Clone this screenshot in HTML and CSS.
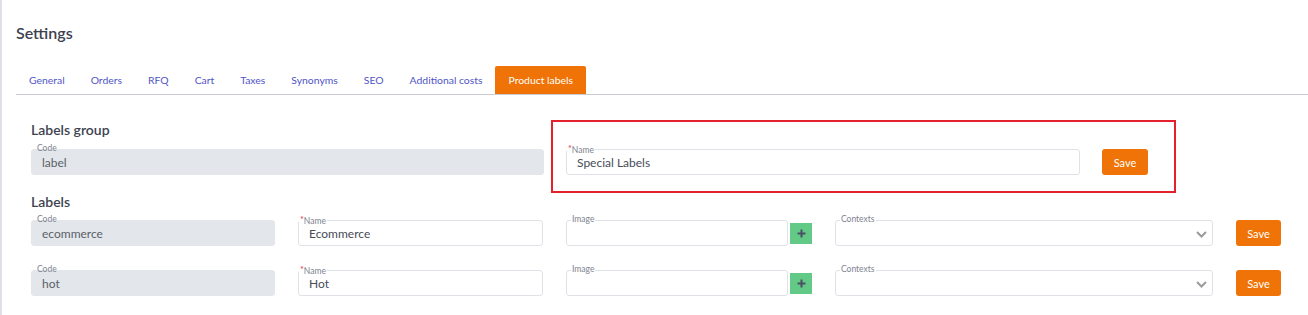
FILE: index.html
```html
<!DOCTYPE html>
<html lang="en">
<head>
  <meta charset="UTF-8">
  <meta name="viewport" content="width=device-width, initial-scale=1.0">
  <title>Settings</title>
  <link rel="stylesheet" href="styles.css">
</head>
<body>
  <div class="page">
    <h1 class="page-title">Settings</h1>
    <nav class="tabs">
      <a class="tab" href="#">General</a>
      <a class="tab" href="#">Orders</a>
      <a class="tab" href="#">RFQ</a>
      <a class="tab" href="#">Cart</a>
      <a class="tab" href="#">Taxes</a>
      <a class="tab" href="#">Synonyms</a>
      <a class="tab" href="#">SEO</a>
      <a class="tab" href="#">Additional costs</a>
      <a class="tab active" href="#">Product labels</a>
    </nav>

    <div class="panel">
      <div class="group-row">
        <div class="group-code">
          <h2 class="section-title">Labels group</h2>
          <div class="field readonly">
            <label class="field-label">Code</label>
            <input type="text" value="label" readonly>
          </div>
        </div>
        <div class="highlight">
          <div class="field group-name">
            <label class="field-label required"><span class="req">*</span>Name</label>
            <input type="text" value="Special Labels">
          </div>
          <button class="btn-save">Save</button>
        </div>
      </div>

      <h2 class="section-title labels-title">Labels</h2>

      <div class="label-row">
        <div class="field readonly">
          <label class="field-label">Code</label>
          <input type="text" value="ecommerce" readonly>
        </div>
        <div class="field">
          <label class="field-label required"><span class="req">*</span>Name</label>
          <input type="text" value="Ecommerce">
        </div>
        <div class="image-group">
          <div class="field">
            <label class="field-label">Image</label>
            <input type="text" value="">
          </div>
          <button class="btn-add" title="Add image">
            <svg width="9" height="9" viewBox="0 0 9 9"><path d="M4.5 0.5v8M0.5 4.5h8" stroke="#4b4f63" stroke-width="2"/></svg>
          </button>
        </div>
        <div class="field select-field">
          <label class="field-label">Contexts</label>
          <select><option></option></select>
          <svg class="chevron" width="11" height="7" viewBox="0 0 11 7"><path d="M1 1l4.5 4.5L10 1" fill="none" stroke="#9b9b9b" stroke-width="2"/></svg>
        </div>
        <button class="btn-save">Save</button>
      </div>

      <div class="label-row">
        <div class="field readonly">
          <label class="field-label">Code</label>
          <input type="text" value="hot" readonly>
        </div>
        <div class="field">
          <label class="field-label required"><span class="req">*</span>Name</label>
          <input type="text" value="Hot">
        </div>
        <div class="image-group">
          <div class="field">
            <label class="field-label">Image</label>
            <input type="text" value="">
          </div>
          <button class="btn-add" title="Add image">
            <svg width="9" height="9" viewBox="0 0 9 9"><path d="M4.5 0.5v8M0.5 4.5h8" stroke="#4b4f63" stroke-width="2"/></svg>
          </button>
        </div>
        <div class="field select-field">
          <label class="field-label">Contexts</label>
          <select><option></option></select>
          <svg class="chevron" width="11" height="7" viewBox="0 0 11 7"><path d="M1 1l4.5 4.5L10 1" fill="none" stroke="#9b9b9b" stroke-width="2"/></svg>
        </div>
        <button class="btn-save">Save</button>
      </div>
    </div>
  </div>
</body>
</html>
```

FILE: styles.css
```css
* { box-sizing: border-box; }
html, body { margin: 0; height: 100%; }
body { font-family: Lato, "Open Sans", sans-serif; color: #3e4350; background: #fff; }
.page { min-height: 100%; border-left: 2px solid #dde0e4; padding: 23px 0 0 14px; }
.page-title { margin: 0; font-size: 16px; line-height: 20px; font-weight: 600; color: #3c4150; }

.tabs { display: flex; margin-top: 23px; border-bottom: 1px solid #c9ccd2; }
.tab { height: 28px; padding: 0 13px; line-height: 28px; font-size: 10.4px; color: #4f55c7; text-decoration: none; border-radius: 2px 2px 0 0; }
.tab.active { background: #ef7306; color: #fff; }

.panel { padding: 25px 0 0 15px; }
.section-title { margin: 0 0 11px; font-size: 14px; line-height: 17px; font-weight: 600; color: #3e4350; }
.labels-title { margin-bottom: 10px; }

.group-row { display: flex; align-items: flex-end; }
.group-code { width: 513px; margin-bottom: 18px; }
.highlight { display: flex; align-items: center; gap: 22px; margin-left: 7px; padding: 27px 26px 16px 13px; border: 2px solid #e4202a; }
.group-name { width: 514px; }

.label-row { display: grid; grid-template-columns: 244px 245px 246px 378px 45px; column-gap: 23px; align-items: center; margin-bottom: 24px; }

.field { position: relative; height: 26px; border: 1px solid #dfe2e6; border-radius: 3px; background: #fff; }
.field.readonly { background: #e3e6ea; border-color: #e3e6ea; }
.field-label { position: absolute; top: -6px; left: 4px; padding: 0 1px; font-size: 8.5px; line-height: 9px; color: #7e838f; background: #fff; }
.field.readonly .field-label { background: transparent; }
.field-label.required { left: 0; }
.req { color: #e5303a; font-size: 9px; vertical-align: 1px; }
.field input, .field select { display: block; width: 100%; height: 100%; padding: 0 10px; border: none; background: transparent; font-family: inherit; font-size: 12px; color: #474c57; outline: none; }
.field.readonly input { color: #5a5f69; }
.field select { appearance: none; -webkit-appearance: none; }
.chevron { position: absolute; right: 5px; top: 10px; pointer-events: none; }

.image-group { display: flex; align-items: center; gap: 2px; }
.image-group .field { flex: 1; }
.btn-add { display: flex; align-items: center; justify-content: center; width: 22px; height: 21px; padding: 0; border: none; background: #62c987; cursor: pointer; }

.btn-save { width: 46px; height: 26px; padding: 0; border: none; border-radius: 3px; background: #ef7306; color: #fff; font-family: inherit; font-size: 11px; cursor: pointer; }
.label-row .btn-save { width: 45px; }
```
